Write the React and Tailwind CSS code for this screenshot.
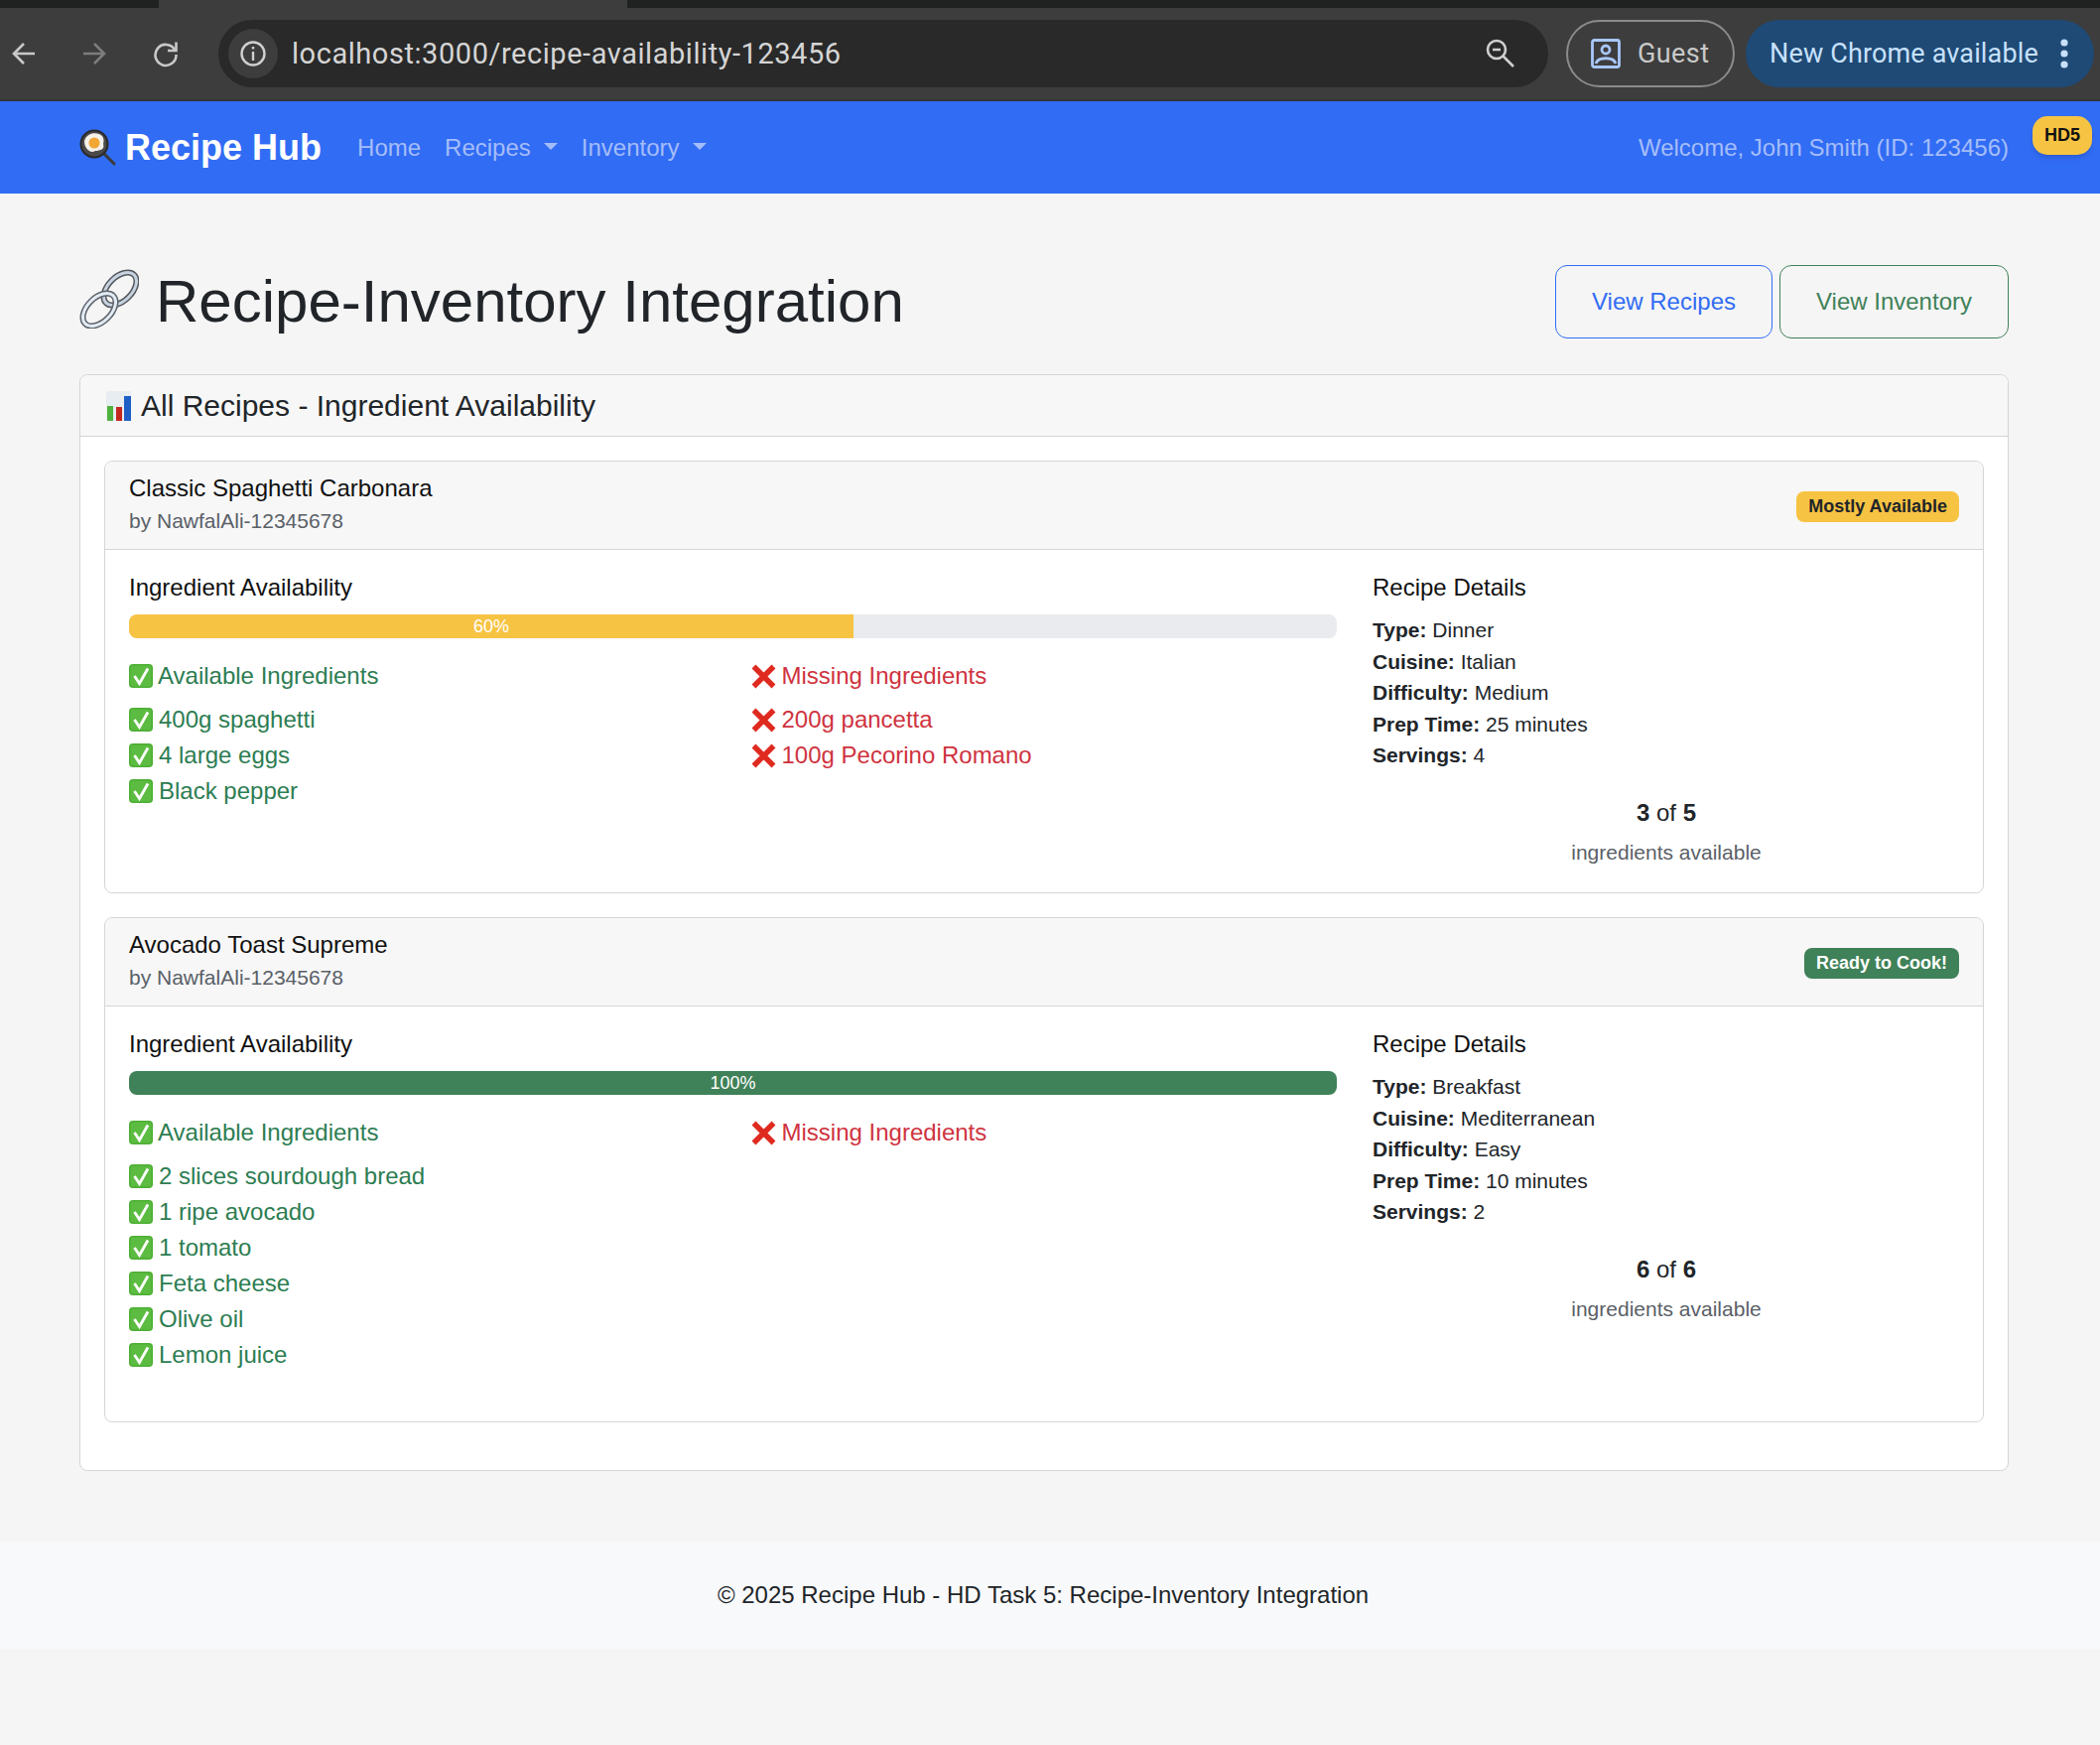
import React from 'react'

const sans = "font-['Liberation_Sans',Arial,sans-serif]"

const PanEmoji = () => (
  <svg width="38" height="38" viewBox="0 0 38 38" className="shrink-0">
    <path d="M24 24 L35 35" stroke="#3a3a3a" strokeWidth="3" strokeLinecap="round" />
    <circle cx="15" cy="15" r="14.5" fill="#2a2a2a" />
    <circle cx="15" cy="15" r="12.5" fill="#4a4a4a" />
    <path d="M5 12 C7 5 14 3 20 5 C25 7 25 12 24 15 C26 20 21 22 16 22 C11 25 5 20 5 12Z" fill="#f4f1ea" />
    <circle cx="15" cy="14" r="5.5" fill="#f2a733" />
  </svg>
)

const LinkEmoji = () => (
  <svg width="60" height="60" viewBox="0 0 60 60" className="shrink-0 -mt-[6px]">
    <g fill="none">
      <ellipse cx="41" cy="20" rx="20" ry="12" transform="rotate(-45 41 20)" stroke="#55595f" strokeWidth="6" />
      <ellipse cx="41" cy="20" rx="20" ry="12" transform="rotate(-45 41 20)" stroke="#c7d3e0" strokeWidth="3" />
      <ellipse cx="20" cy="41" rx="20" ry="12" transform="rotate(-45 20 41)" stroke="#5f656d" strokeWidth="6" />
      <ellipse cx="20" cy="41" rx="20" ry="12" transform="rotate(-45 20 41)" stroke="#e3ebf4" strokeWidth="3" />
    </g>
  </svg>
)

const ChartEmoji = () => (
  <svg width="25" height="30" viewBox="0 0 25 30" className="shrink-0">
    <rect width="25" height="30" fill="#e8edf2" />
    <rect x="1" y="15" width="6" height="15" fill="#4fb33d" />
    <rect x="10" y="16" width="6" height="14" fill="#c4281c" />
    <rect x="18" y="5" width="7" height="25" fill="#1e5fc4" />
  </svg>
)

const CheckEmoji = () => (
  <svg width="24" height="24" viewBox="0 0 24 24" className="shrink-0">
    <rect width="24" height="24" rx="4" fill="#4caf33" />
    <rect x="1.5" y="1.5" width="21" height="21" rx="3" fill="#5cbc42" />
    <path d="M5.5 12 L10.5 19.5 L19 4.5" fill="none" stroke="#fff" strokeWidth="2.8" />
  </svg>
)

const CrossEmoji = () => (
  <svg width="25" height="25" viewBox="0 0 25 25" className="shrink-0">
    <path d="M2.5 2.5 L22.5 22.5 M22.5 2.5 L2.5 22.5" stroke="#df2a20" strokeWidth="5.5" />
  </svg>
)

const recipes = [
  {
    title: 'Classic Spaghetti Carbonara',
    status: 'Mostly Available',
    statusClass: 'bg-[#f7c343] text-[#212529]',
    pct: '60%',
    fill: 'w-[60%] bg-[#f7c343]',
    available: ['400g spaghetti', '4 large eggs', 'Black pepper'],
    missing: ['200g pancetta', '100g Pecorino Romano'],
    details: [['Type', 'Dinner'], ['Cuisine', 'Italian'], ['Difficulty', 'Medium'], ['Prep Time', '25 minutes'], ['Servings', '4']],
    have: 3,
    total: 5,
    height: 'h-[436px]',
  },
  {
    title: 'Avocado Toast Supreme',
    status: 'Ready to Cook!',
    statusClass: 'bg-[#3f8158] text-white',
    pct: '100%',
    fill: 'w-full bg-[#3f8158]',
    available: ['2 slices sourdough bread', '1 ripe avocado', '1 tomato', 'Feta cheese', 'Olive oil', 'Lemon juice'],
    missing: [],
    details: [['Type', 'Breakfast'], ['Cuisine', 'Mediterranean'], ['Difficulty', 'Easy'], ['Prep Time', '10 minutes'], ['Servings', '2']],
    have: 6,
    total: 6,
    height: 'h-[509px]',
  },
]

const RecipeCard = ({ recipe }) => (
  <div className={`${recipe.height} rounded-[8px] border border-[#d4d5d6] overflow-hidden`}>
    <div className="h-[89px] flex items-center justify-between px-[24px] bg-[#f7f7f7] border-b border-[#d4d5d6]">
      <div className="-mt-[3px]">
        <div className="text-[24px] leading-[33px] text-[#111]">{recipe.title}</div>
        <div className="text-[21px] leading-[33px] text-[#5a6067]">by NawfalAli-12345678</div>
      </div>
      <span className={`${recipe.statusClass} mt-[2px] rounded-[8px] h-[31px] px-[12px] flex items-center text-[18px] font-bold`}>{recipe.status}</span>
    </div>
    <div className="grid grid-cols-[1217px_592px] gap-x-[36px] px-[24px] pt-[23px]">
      <div>
        <h6 className="text-[24px] leading-[30px] mb-[12px] text-[#111]">Ingredient Availability</h6>
        <div className="h-[24px] rounded-[8px] bg-[#e9ebef] overflow-hidden">
          <div className={`${recipe.fill} h-full flex items-center justify-center text-white text-[18px]`}>{recipe.pct}</div>
        </div>
        <div className="grid grid-cols-2 gap-x-[36px] mt-[22px]">
          <div className="text-[#2d7d52] text-[24px]">
            <div className="flex items-center gap-[5px] h-[32px] mb-[10px]"><CheckEmoji />Available Ingredients</div>
            {recipe.available.map((item) => (
              <div key={item} className="flex items-center gap-[6px] h-[36px]"><CheckEmoji />{item}</div>
            ))}
          </div>
          <div className="text-[#cf3340] text-[24px]">
            <div className="flex items-center gap-[6px] h-[32px] mb-[10px]"><CrossEmoji />Missing Ingredients</div>
            {recipe.missing.map((item) => (
              <div key={item} className="flex items-center gap-[6px] h-[36px]"><CrossEmoji />{item}</div>
            ))}
          </div>
        </div>
      </div>
      <div>
        <h6 className="text-[24px] leading-[30px] mb-[12px] text-[#111]">Recipe Details</h6>
        <div className="text-[21px] leading-[31.6px] text-[#212529]">
          {recipe.details.map(([label, value]) => (
            <div key={label}><strong className="font-bold">{label}:</strong> {value}</div>
          ))}
        </div>
        <div className="mt-[26px] text-center">
          <div className="text-[24px] leading-[32px] text-[#212529]"><b>{recipe.have}</b> of <b>{recipe.total}</b></div>
          <div className="mt-[9px] text-[21px] leading-[30px] text-[#5a6067]">ingredients available</div>
        </div>
      </div>
    </div>
  </div>
)

const BrowserBar = () => (
  <div className="bg-[#202221]">
    <div className="h-[8px] flex justify-between">
      <div className="w-[160px] h-[8px] bg-[#202221]" />
      <div className="flex-1 bg-[#3d3d3d]" />
      <div className="w-[1484px] bg-[#202221]" />
    </div>
    <div className="h-[94px] bg-[#3d3d3d] border-b-2 border-[#333] flex items-center font-['Roboto',sans-serif] pl-[11px] pr-[6px]">
      <svg width="26" height="26" viewBox="0 0 26 26" fill="none" stroke="#c9c9c9" strokeWidth="2.6" className="shrink-0">
        <path d="M24 13 H3 M13 3 L3 13 L13 23" />
      </svg>
      <svg width="26" height="26" viewBox="0 0 26 26" fill="none" stroke="#7d7d7d" strokeWidth="2.6" className="ml-[45px] shrink-0">
        <path d="M2 13 H23 M13 3 L23 13 L13 23" />
      </svg>
      <svg width="28" height="28" viewBox="0 0 28 28" fill="none" stroke="#c9c9c9" strokeWidth="2.6" className="ml-[45px] shrink-0">
        <path d="M23 10 A10.5 10.5 0 1 0 24.5 15" />
        <path d="M24.5 2.5 V11 H16" />
      </svg>
      <div className="ml-[39px] w-[1340px] h-[68px] shrink-0 rounded-full bg-[#292929] flex items-center pl-[10px] pr-[32px]">
        <div className="w-[50px] h-[50px] rounded-full bg-[#3d3d3d] flex items-center justify-center shrink-0">
          <svg width="28" height="28" viewBox="0 0 28 28" fill="none" stroke="#d0d0d0" strokeWidth="2.4">
            <circle cx="14" cy="14" r="11.5" />
            <path d="M14 12 V21 M14 7 V9.5" />
          </svg>
        </div>
        <span className="ml-[14px] mt-[1px] text-[29px] text-[#d5d5d5] tracking-[0.55px]">localhost:3000/recipe-availability-123456</span>
        <svg width="32" height="32" viewBox="0 0 32 32" fill="none" stroke="#cfcfcf" strokeWidth="2.6" className="ml-auto">
          <circle cx="12" cy="12" r="9" />
          <path d="M18.5 18.5 L29 29 M8 12 H16" />
        </svg>
      </div>
      <div className="ml-[18px] w-[170px] h-[68px] shrink-0 rounded-full border-2 border-[#8b8b8b] flex items-center pl-[23px] gap-[17px]">
        <svg width="30" height="30" viewBox="0 0 30 30" fill="none" stroke="#a8c7fa" strokeWidth="2.8">
          <rect x="1.5" y="1.5" width="27" height="27" rx="2" />
          <circle cx="15" cy="11" r="4" />
          <path d="M5 25 C7 18 23 18 25 25" />
        </svg>
        <span className="text-[27px] text-[#c9c9c9] tracking-[0.4px]">Guest</span>
      </div>
      <div className="ml-[11px] w-[351px] h-[68px] shrink-0 rounded-full bg-[#1f4a75] flex items-center pl-[24px]">
        <span className="text-[27px] text-[#c7e1fc] tracking-[0.15px]">New Chrome available</span>
        <svg width="10" height="30" viewBox="0 0 10 30" fill="#c7e1fc" className="ml-[21px]">
          <circle cx="5" cy="4" r="3.6" />
          <circle cx="5" cy="15" r="3.6" />
          <circle cx="5" cy="26" r="3.6" />
        </svg>
      </div>
    </div>
  </div>
)

const Caret = () => <span className="inline-block ml-[13px] align-[6px] border-x-[7px] border-x-transparent border-t-[7px] border-t-[#a4bdf9]" />

export default function App() {
  return (
    <div className={`min-h-screen bg-[#f5f5f5] ${sans}`}>
      <BrowserBar />

      <nav className="relative h-[93px] bg-[#316cf4] flex items-center pl-[80px] pr-[92px]">
        <div className="flex items-center gap-[8px] text-[36px] font-bold text-white"><PanEmoji />Recipe Hub</div>
        <div className="flex items-center ml-[36px] text-[24px] text-[#a4bdf9] gap-[24px]">
          <span>Home</span>
          <span>Recipes<Caret /></span>
          <span>Inventory<Caret /></span>
        </div>
        <span className="ml-auto text-[24px] text-[#a4bdf9]">Welcome, John Smith (ID: 123456)</span>
        <span className="absolute right-[8px] top-[15px] w-[60px] h-[39px] rounded-[15px] bg-[#f7c343] text-[#111] font-bold text-[18px] flex items-center justify-center shadow-md">HD5</span>
      </nav>

      <main className="pl-[80px] pr-[92px] pt-[72px] pb-[71px]">
        <div className="flex items-center justify-between h-[74px] mb-[36px]">
          <h1 className="flex items-center gap-[17px] text-[60px] text-[#212529]"><LinkEmoji />Recipe-Inventory Integration</h1>
          <div className="flex gap-[7px] text-[24px]">
            <button className="w-[219px] h-[74px] rounded-[12px] border border-[#316cf4] text-[#316cf4]">View Recipes</button>
            <button className="w-[231px] h-[74px] rounded-[12px] border border-[#3f8158] text-[#3f8158]">View Inventory</button>
          </div>
        </div>

        <section className="h-[1105px] rounded-[8px] border border-[#d4d5d6] bg-white overflow-hidden">
          <div className="h-[62px] flex items-center gap-[10px] pl-[26px] bg-[#f7f7f7] border-b border-[#d4d5d6] text-[30px] text-[#212529]">
            <ChartEmoji />All Recipes - Ingredient Availability
          </div>
          <div className="flex flex-col gap-[24px] px-[24px] pt-[24px]">
            {recipes.map((recipe) => <RecipeCard key={recipe.title} recipe={recipe} />)}
          </div>
        </section>
      </main>

      <footer className="h-[108px] bg-[#f8f9fa] flex items-center justify-center pr-[14px] text-[24px] text-[#212529]">
        © 2025 Recipe Hub - HD Task 5: Recipe-Inventory Integration
      </footer>
    </div>
  )
}
